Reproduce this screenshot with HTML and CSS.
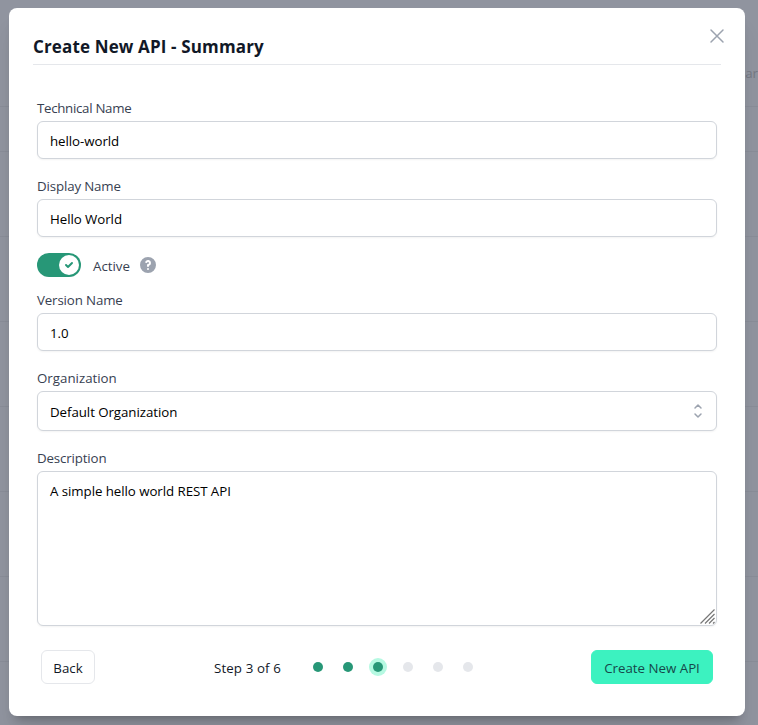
FILE: index.html
```html
<!DOCTYPE html>
<html lang="en">
<head>
<meta charset="utf-8">
<title>Create New API</title>
<link rel="stylesheet" href="styles.css">
</head>
<body>
<div class="backdrop"><span class="column-head">Sear</span></div>
<main class="modal" role="dialog" aria-labelledby="title">
  <button class="close" aria-label="Close"><svg viewBox="0 0 24 24"><path d="M6 18L18 6M6 6l12 12"/></svg></button>
  <h1 class="title" id="title">Create New API - Summary</h1>
  <form class="form">
    <label class="label tighter" for="tech">Technical Name</label>
    <input class="field" id="tech" value="hello-world">
    <label class="label tight" for="display">Display Name</label>
    <input class="field" id="display" value="Hello World">
    <div class="switch-row">
      <span class="switch"><span class="knob"><svg viewBox="0 0 12 12"><path d="M3.707 5.293a1 1 0 00-1.414 1.414l1.414-1.414zM5 8l-.707.707a1 1 0 001.414 0L5 8zm4.707-3.293a1 1 0 00-1.414-1.414l1.414 1.414zm-7.414 2l2 2 1.414-1.414-2-2-1.414 1.414zm3.414 2l4-4-1.414-1.414-4 4 1.414 1.414z"/></svg></span></span>
      <span class="switch-label">Active</span>
      <svg class="help" viewBox="0 0 20 20"><path fill-rule="evenodd" d="M18 10a8 8 0 11-16 0 8 8 0 0116 0zm-8-3a1 1 0 00-.867.5 1 1 0 11-1.731-1A3 3 0 0113 8a3.001 3.001 0 01-2 2.83V11a1 1 0 11-2 0v-1a1 1 0 011-1 1 1 0 100-2zm0 8a1 1 0 100-2 1 1 0 000 2z"/></svg>
    </div>
    <label class="label tight" for="version">Version Name</label>
    <input class="field" id="version" value="1.0">
    <label class="label">Organization</label>
    <div class="select"><span>Default Organization</span><svg viewBox="0 0 20 20"><path d="M7 7l3-3 3 3m0 6l-3 3-3-3"/></svg></div>
    <label class="label tight" for="desc">Description</label>
    <div class="area">
      <textarea class="textarea" id="desc">A simple hello world REST API</textarea>
      <svg class="grip" viewBox="0 0 15 15"><path d="M.5 14.500L14.500 .5M5 14.500L14.500 5M9 14.500L14.500 9M13 14.500L14.500 13"/></svg>
    </div>
  </form>
  <footer class="footer">
    <button class="btn">Back</button>
    <div class="steps">
      <span class="step-text">Step 3 of 6</span>
      <span class="dots"><i class="dot done"></i><i class="dot done"></i><i class="dot done current"></i><i class="dot"></i><i class="dot"></i><i class="dot"></i></span>
    </div>
    <button class="btn primary">Create New API</button>
  </footer>
</main>
</body>
</html>
```
FILE: styles.css
```css
* { box-sizing: border-box; }
body {
  margin: 0;
  width: 758px;
  height: 725px;
  padding: 8px 13px 9px 9px;
  overflow: hidden;
  background: #90949f;
  font: 13.3px/20px "Open Sans", "Noto Sans", sans-serif;
  color: #000;
}
button, input, textarea { font: inherit; }
.backdrop {
  position: absolute;
  inset: 151px 0 0;
  background: repeating-linear-gradient(#898d98 0 1px, transparent 1px 85px);
}
.backdrop::before {
  content: "";
  position: absolute;
  left: 0;
  right: 0;
  top: -45px;
  height: 1px;
  background: #898d98;
}
.column-head {
  position: absolute;
  right: 0;
  top: -88px;
  color: #747883;
}
.modal {
  position: relative;
  height: 708px;
  padding: 24px 24px 0;
  border-radius: 8px;
  background: #fff;
  box-shadow: 0 20px 25px -5px rgba(0, 0, 0, .1), 0 8px 10px -6px rgba(0, 0, 0, .25);
}
.close {
  position: absolute;
  top: 16px;
  right: 16px;
  width: 24px;
  height: 24px;
  padding: 0;
  border: 0;
  background: none;
}
.close svg { display: block; width: 24px; height: 24px; fill: none; stroke: #9ca3af; stroke-width: 1.5; stroke-linecap: round; }
.title {
  margin: 0;
  height: 33px;
  border-bottom: 1px solid #e5e7eb;
  color: #111827;
  font-size: 17px;
  line-height: 29px;
  font-weight: 700;
  letter-spacing: .14px;
  white-space: nowrap;
}
.form { display: flex; flex-direction: column; padding: 32px 4px 0; }
.label { height: 20px; margin: 16px 0 4px; line-height: 22px; color: #374151; }
.label:first-child { margin-top: 0; }
.tight { letter-spacing: -.14px; }
.tighter { letter-spacing: -.3px; }
.field, .select, .textarea {
  display: flex;
  width: 100%;
  height: 38px;
  margin: 0;
  padding: 2px 12px 0;
  border: 1px solid #d1d5db;
  border-radius: 6px;
  outline: 0;
  background: #fff;
  color: #000;
  letter-spacing: -.06px;
  box-shadow: 0 1px 2px rgba(0, 0, 0, .05);
}
.switch-row { display: flex; align-items: center; height: 24px; margin: 16px 0 -4px; }
.switch { display: flex; justify-content: flex-end; width: 44px; height: 24px; padding: 2px; border-radius: 12px; background: #279777; }
.knob { display: grid; place-items: center; width: 20px; height: 20px; border-radius: 50%; background: #fff; }
.knob svg { width: 12px; height: 12px; fill: #279777; }
.switch-label { margin-left: 12px; width: 45px; padding-top: 2px; color: #374151; }
.help { width: 20px; height: 20px; fill: #9ca3af; }
.select { height: 40px; align-items: center; justify-content: space-between; padding-right: 8px; }
.select svg { width: 20px; height: 20px; margin-top: -2px; fill: none; stroke: #9ca3af; stroke-width: 1.5; stroke-linecap: round; stroke-linejoin: round; }
.area { position: relative; height: 155px; }
.textarea { height: 155px; padding-top: 9px; resize: none; }
.grip { position: absolute; right: 2px; bottom: 2px; width: 15px; height: 15px; fill: none; stroke: #777; stroke-width: 1.2; }
.footer { display: flex; align-items: center; justify-content: space-between; margin: 24px 8px 0; height: 34px; }
.btn { width: 54px; height: 34px; padding: 2px 0 0; border: 1px solid #e5e7eb; border-radius: 6px; background: #fff; color: #111827; white-space: nowrap; }
.primary { width: 122px; border-color: #3cf2c0; background: #3cf2c0; color: #16484a; }
.steps { display: flex; align-items: center; width: 258px; }
.step-text { flex: none; width: 99px; padding-top: 2px; color: #111827; letter-spacing: .12px; white-space: nowrap; }
.dots { display: flex; flex: none; gap: 20px; }
.dot { width: 10px; height: 10px; border-radius: 50%; background: #e5e7eb; }
.done { background: #279777; }
.current { box-shadow: 0 0 0 4px #b6f9e2; }
```
